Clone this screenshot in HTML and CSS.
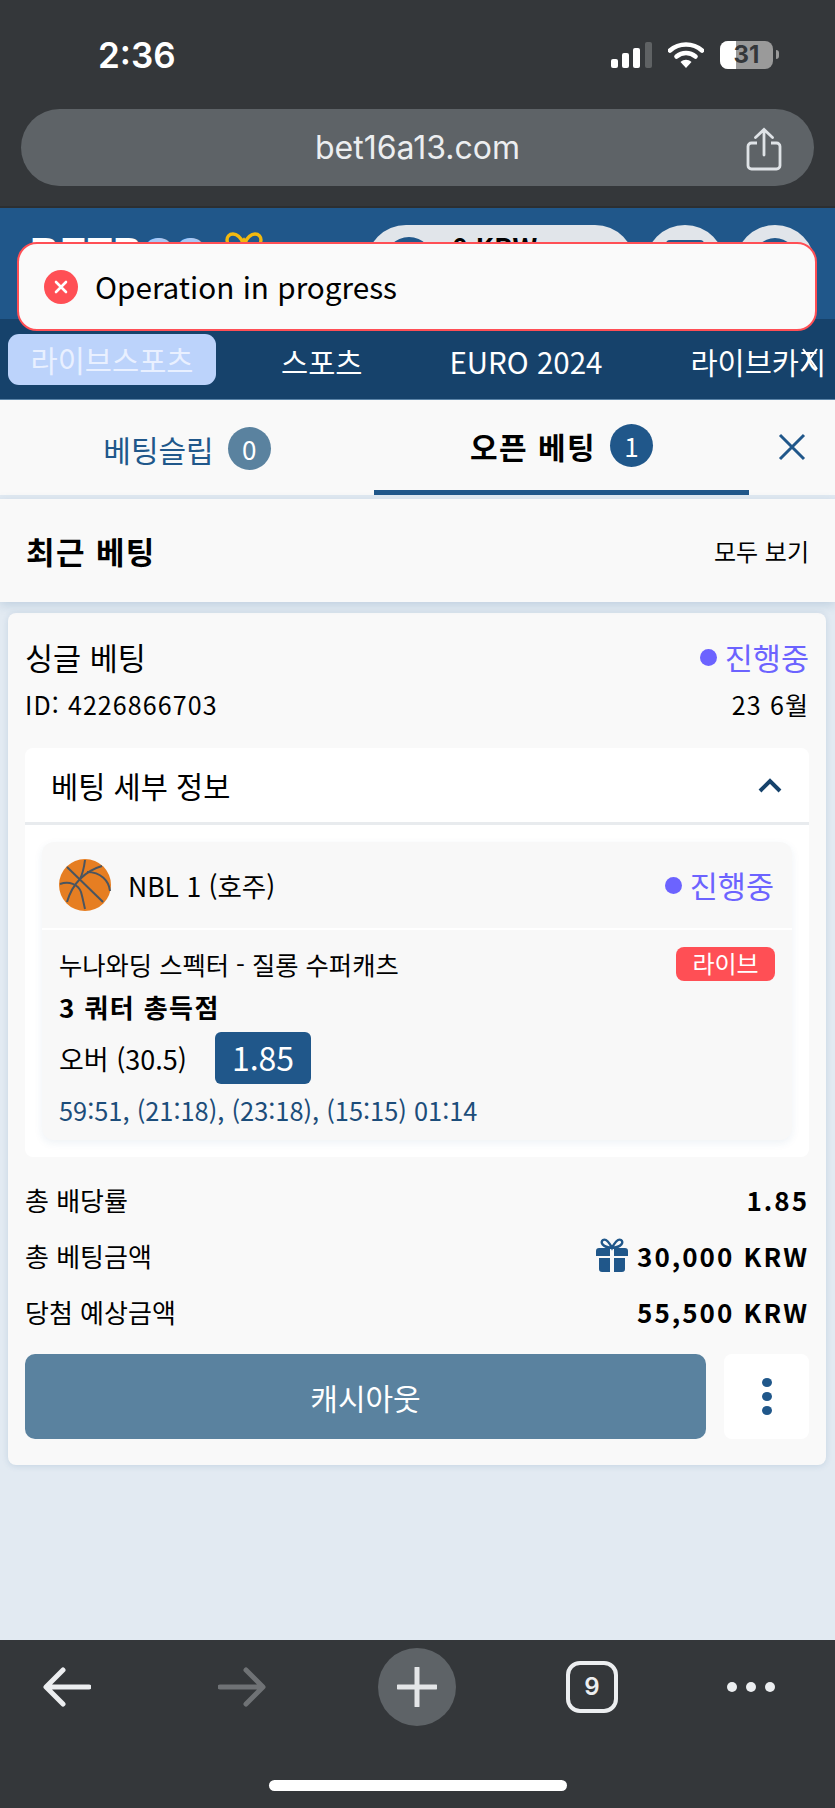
FILE: index.html
```html
<!DOCTYPE html>
<html lang="ko">
<head>
  <meta charset="UTF-8">
  <title>bet16a13.com</title>
  <link rel="stylesheet" href="styles.css">
</head>
<body>
  <div class="browser-top">
    <div class="status-bar">
      <span class="time">2:36</span>
      <div class="status-icons">
        <svg class="signal" width="41" height="26" viewBox="0 0 41 26">
          <rect x="0" y="17" width="7" height="9" rx="2" fill="#fff"/>
          <rect x="11" y="11" width="7" height="15" rx="2" fill="#fff"/>
          <rect x="22" y="6" width="7" height="20" rx="2" fill="#fff"/>
          <rect x="34" y="0" width="7" height="26" rx="2" fill="#5f6264"/>
        </svg>
        <svg class="wifi" width="36" height="27" viewBox="0 0 36 27">
          <path d="M2 9.5C11 1.5 25 1.5 34 9.5" fill="none" stroke="#fff" stroke-width="4.6" stroke-linecap="round"/>
          <path d="M8.5 15.5C14 10.8 22 10.8 27.5 15.5" fill="none" stroke="#fff" stroke-width="4.6" stroke-linecap="round"/>
          <path d="M12.5 21L18 27L23.5 21C20 18 16 18 12.5 21Z" fill="#fff"/>
        </svg>
        <div class="battery"><span class="battery-fill"></span><span class="battery-num">31</span></div>
        <span class="battery-nub"></span>
      </div>
    </div>
    <div class="url-bar">
      <span class="url">bet16a13.com</span>
      <svg class="share" width="36" height="44" viewBox="0 0 36 44">
        <path d="M11 16H5.5C3.5 16 2 17.500 2 19.500V38.500C2 40.500 3.500 42 5.500 42H30.500C32.500 42 34 40.500 34 38.500V19.500C34 17.500 32.500 16 30.500 16H25" fill="none" stroke="#dfe3e7" stroke-width="2.800"/>
        <path d="M18 28V3M9.500 10.500L18 2.500L26.500 10.500" fill="none" stroke="#dfe3e7" stroke-width="2.800" stroke-linecap="round"/>
      </svg>
    </div>
  </div>

  <header class="site-header">
    <div class="logo">
      <span class="logo-text">BETB<em>OO</em></span>
      <svg class="logo-mark" width="38" height="24" viewBox="0 0 38 24">
        <path d="M19 12C15 4 11 2 8 2C4 2 2 5 2 8C2 12 5 15 8 15C12 15 16 12 19 8C22 12 26 15 30 15C33 15 36 12 36 8C36 5 34 2 30 2C27 2 23 4 19 12Z" fill="none" stroke="#f2b90f" stroke-width="3.400"/>
      </svg>
    </div>
    <div class="header-right">
      <div class="balance"><span class="balance-dot"></span><span class="balance-text">0 KRW</span></div>
      <div class="round-btn"><span class="round-inner square"></span></div>
      <div class="round-btn"><span class="round-inner"></span></div>
    </div>
  </header>

  <nav class="main-nav">
    <div class="nav-scroll">
      <a class="nav-item active">라이브스포츠</a>
      <a class="nav-item sports">스포츠</a>
      <a class="nav-item euro">EURO 2024</a>
      <a class="nav-item casino">라이브카지노</a>
    </div>
    <svg class="nav-close" width="18" height="24" viewBox="0 0 18 24">
      <path d="M2 2L16 22M16 2L2 22" stroke="#fff" stroke-width="2"/>
    </svg>
  </nav>

  <div class="toast">
    <svg class="toast-icon" width="34" height="34" viewBox="0 0 34 34">
      <circle cx="17" cy="17" r="17" fill="#ff4f55"/>
      <path d="M12 12L22 22M22 12L12 22" stroke="#fff" stroke-width="2.600" stroke-linecap="round"/>
    </svg>
    <span>Operation in progress</span>
  </div>

  <main class="content">
    <div class="tabs">
      <div class="tab">베팅슬립 <span class="count muted">0</span></div>
      <div class="tab current">오픈 베팅 <span class="count">1</span></div>
      <svg class="tabs-close" width="28" height="28" viewBox="0 0 28 28">
        <path d="M2 2L26 26M26 2L2 26" stroke="#20578a" stroke-width="3"/>
      </svg>
    </div>

    <div class="section-head">
      <h2>최근 베팅</h2>
      <a class="see-all">모두 보기</a>
    </div>

    <section class="bet-card">
      <div class="bet-top">
        <span class="bet-type">싱글 베팅</span>
        <span class="status"><i></i>진행중</span>
      </div>
      <div class="bet-id">
        <span>ID: 4226866703</span>
        <span>23 6월</span>
      </div>

      <div class="details">
        <div class="details-head">
          <span>베팅 세부 정보</span>
          <svg width="26" height="16" viewBox="0 0 26 16">
            <path d="M3 14L13 4L23 14" fill="none" stroke="#16426b" stroke-width="4"/>
          </svg>
        </div>
        <div class="match">
          <div class="match-head">
            <div class="league">
              <svg width="52" height="52" viewBox="0 0 52 52">
                <circle cx="26" cy="26" r="26" fill="#e67e22"/>
                <g fill="none" stroke="#4a5560" stroke-width="2">
                  <path d="M8 8L44 43"/>
                  <path d="M26 1C25 9 24 14 21 20"/>
                  <path d="M43 7C36 9 28 13 21 20C16 25 11 33 8 43"/>
                  <path d="M1 25C10 22 19 25 22 33C24 40 25 46 26 50"/>
                  <path d="M51 32C50 22 42 13 28 13"/>
                </g>
              </svg>
              <span>NBL 1 (호주)</span>
            </div>
            <span class="status"><i></i>진행중</span>
          </div>
          <div class="match-body">
            <div class="teams">
              <span>누나와딩 스펙터 - 질롱 수퍼캐츠</span>
              <span class="live">라이브</span>
            </div>
            <div class="market">3 쿼터 총득점</div>
            <div class="pick">
              <span>오버 (30.5)</span>
              <span class="odds">1.85</span>
            </div>
            <div class="score">59:51, (21:18), (23:18), (15:15) 01:14</div>
          </div>
        </div>
      </div>

      <div class="summary">
        <div class="sum-row"><span>총 배당률</span><b>1.85</b></div>
        <div class="sum-row">
          <span>총 베팅금액</span>
          <b class="with-icon">
            <svg width="32" height="34" viewBox="0 0 32 34">
              <path d="M16 10C12 2 9 1 7 2C4 4 6 9 16 10C26 9 28 4 25 2C23 1 20 2 16 10Z" fill="none" stroke="#20578a" stroke-width="2.400"/>
              <path d="M3 10H14V18H0V13C0 11 1 10 3 10ZM18 10H29C31 10 32 11 32 13V18H18ZM3 20H14V34H6C4 34 3 33 3 31ZM18 20H29V31C29 33 28 34 26 34H18Z" fill="#20578a"/>
            </svg>
            30,000 KRW
          </b>
        </div>
        <div class="sum-row"><span>당첨 예상금액</span><b>55,500 KRW</b></div>
      </div>

      <div class="actions">
        <button class="cashout">캐시아웃</button>
        <button class="more"><i></i><i></i><i></i></button>
      </div>
    </section>
  </main>

  <div class="browser-bottom">
    <div class="toolbar">
      <div class="tool">
        <svg width="48" height="40" viewBox="0 0 48 40">
          <path d="M46 20H4M20 3L3 20L20 37" fill="none" stroke="#eceef0" stroke-width="5" stroke-linecap="round" stroke-linejoin="round"/>
        </svg>
      </div>
      <div class="tool">
        <svg width="48" height="40" viewBox="0 0 48 40">
          <path d="M2 20H44M28 3L45 20L28 37" fill="none" stroke="#6f7275" stroke-width="5" stroke-linecap="round" stroke-linejoin="round"/>
        </svg>
      </div>
      <div class="tool">
        <div class="new-tab">
          <svg width="40" height="40" viewBox="0 0 40 40">
            <path d="M20 1V39M1 20H39" stroke="#e4e6e8" stroke-width="5" stroke-linecap="round"/>
          </svg>
        </div>
      </div>
      <div class="tool"><div class="tab-count">9</div></div>
      <div class="tool"><div class="menu-dots"><i></i><i></i><i></i></div></div>
    </div>
    <div class="home-bar"></div>
  </div>
</body>
</html>
```

FILE: styles.css
```css
* {
  box-sizing: border-box;
}
html, body {
  margin: 0;
  height: 100%;
}
body {
  position: relative;
  display: flex;
  flex-direction: column;
  height: 1808px;
  overflow: hidden;
  font-family: "Noto Sans CJK KR", "Noto Sans", sans-serif;
  color: #000;
  background: #e2eaf2;
}

/* browser chrome */
.browser-top {
  height: 208px;
  background: #34373a;
  border-bottom: 2px solid #2c2f31;
}
.status-bar {
  display: flex;
  justify-content: space-between;
  align-items: center;
  height: 109px;
  padding: 0 56px 0 98px;
  color: #fff;
}
.time {
  font-family: Inter, sans-serif;
  font-size: 35px;
  font-weight: 600;
}
.status-icons {
  display: flex;
  align-items: center;
}
.signal {
  margin-right: 16px;
}
.wifi {
  margin-right: 16px;
}
.battery {
  position: relative;
  width: 53px;
  height: 28px;
  border-radius: 8px;
  overflow: hidden;
  background: #9a9a9a;
  text-align: center;
}
.battery-fill {
  position: absolute;
  left: 0;
  top: 0;
  width: 16px;
  height: 28px;
  background: #fff;
}
.battery-num {
  position: relative;
  font-family: Inter, sans-serif;
  font-size: 24px;
  font-weight: 700;
  line-height: 28px;
  color: #34373a;
}
.battery-nub {
  width: 3px;
  height: 9px;
  margin-left: 3px;
  border-radius: 0 3px 3px 0;
  background: #9a9a9a;
}
.url-bar {
  display: flex;
  align-items: center;
  justify-content: center;
  position: relative;
  height: 77px;
  margin: 0 21px;
  border-radius: 39px;
  background: #5e6367;
}
.url {
  font-family: Inter, sans-serif;
  font-size: 32px;
  color: #eceef0;
}
.share {
  position: absolute;
  right: 32px;
  top: 18px;
}

/* site header + nav */
.site-header {
  display: flex;
  justify-content: space-between;
  height: 111px;
  padding: 17px 20px 0 30px;
  background: #20578a;
  overflow: hidden;
}
.logo {
  display: flex;
  align-items: flex-start;
}
.logo-text {
  width: 175px;
  margin-top: 5px;
  font-family: "Liberation Sans", sans-serif;
  font-size: 40px;
  font-weight: 700;
  line-height: 44px;
  letter-spacing: 1px;
  color: #fff;
}
.logo-text em {
  font-style: normal;
  color: #a9c8f5;
}
.logo-mark {
  margin: 7px 0 0 20px;
}
.header-right {
  display: flex;
  gap: 10px;
}
.balance {
  display: flex;
  align-items: flex-start;
  width: 269px;
  height: 80px;
  padding: 12px 0 0 18px;
  border-radius: 40px;
  background: #e1e5ea;
}
.balance-dot {
  width: 50px;
  height: 50px;
  border-radius: 50%;
  background: #20578a;
}
.balance-text {
  margin: -4px 0 0 18px;
  font-size: 27px;
  font-weight: 700;
  line-height: 28px;
}
.round-btn {
  display: flex;
  justify-content: center;
  width: 80px;
  height: 80px;
  padding-top: 13px;
  border-radius: 50%;
  background: #e1e5ea;
}
.round-inner {
  width: 44px;
  height: 44px;
  border-radius: 50%;
  background: #20578a;
}
.round-inner.square {
  width: 38px;
  margin-top: 2px;
  border-radius: 4px;
}
.main-nav {
  position: relative;
  height: 81px;
  padding-right: 10px;
  background: #16426b;
  border-bottom: 1px solid #5b84a8;
  font-size: 29.500px;
  color: #fff;
  white-space: nowrap;
}
.nav-scroll {
  display: flex;
  align-items: center;
  height: 80px;
  padding-left: 8px;
  overflow: hidden;
}
.nav-item {
  flex: none;
  margin-top: 3px;
}
.nav-item.active {
  width: 208px;
  height: 51px;
  margin-top: 0;
  border-radius: 11px;
  background: #bcd3fb;
  color: #e9f0ff;
  text-align: center;
  line-height: 51px;
}
.sports {
  margin-left: 65px;
}
.euro {
  margin-left: 87px;
}
.casino {
  margin-left: 88px;
}
.nav-close {
  position: absolute;
  right: 16px;
  top: 28px;
}

/* toast */
.toast {
  position: absolute;
  left: 17px;
  top: 242px;
  display: flex;
  align-items: center;
  gap: 17px;
  width: 800px;
  height: 89px;
  padding-left: 25px;
  border: 2px solid #ff4f55;
  border-radius: 20px;
  background: #fafafa;
  font-size: 29.700px;
}

/* slip */
.tabs {
  position: relative;
  display: flex;
  height: 99px;
  background: #f9f9f9;
  border-bottom: 4px solid #e2eaf2;
}
.tab {
  display: flex;
  align-items: center;
  justify-content: center;
  gap: 14px;
  width: 374px;
  height: 95px;
  padding-top: 2px;
  font-size: 30px;
  color: #20578a;
}
.tab.current {
  width: 375px;
  padding-top: 1px;
  border-bottom: 5px solid #20578a;
  font-weight: 700;
  letter-spacing: 1.400px;
  color: #000;
}
.count {
  display: flex;
  align-items: center;
  justify-content: center;
  width: 43px;
  height: 43px;
  border-radius: 50%;
  background: #20578a;
  font-size: 26px;
  font-weight: 400;
  letter-spacing: 0;
  color: #fff;
}
.count.muted {
  background: #5a829f;
}
.tabs-close {
  position: absolute;
  right: 29px;
  top: 33px;
}
.section-head {
  position: relative;
  display: flex;
  justify-content: space-between;
  align-items: center;
  height: 103px;
  padding: 0 26px;
  background: #f9f9f9;
  box-shadow: 0 3px 10px rgba(32, 87, 138, .18);
}
.section-head h2 {
  margin: 0;
  font-size: 31px;
  font-weight: 700;
  letter-spacing: 1.400px;
}
.see-all {
  font-size: 24px;
}
.bet-card {
  margin: 11px 9px 0 8px;
  height: 852px;
  padding: 0 17px;
  border-radius: 8px;
  background: #f9f9f9;
  box-shadow: 0 1px 6px rgba(32, 87, 138, .15);
}
.bet-top,
.bet-id {
  display: flex;
  justify-content: space-between;
  align-items: center;
}
.bet-top {
  height: 66px;
  padding-top: 22px;
}
.bet-type {
  font-size: 30.500px;
}
.status {
  display: flex;
  align-items: center;
  gap: 8px;
  font-size: 30.500px;
  color: #6c63ff;
}
.status i {
  width: 17px;
  height: 17px;
  border-radius: 50%;
  background: #6c63ff;
}
.bet-id {
  height: 48px;
  padding-top: 2px;
  font-size: 25px;
  letter-spacing: 1.100px;
}
.details {
  height: 409px;
  margin-top: 21px;
  border-radius: 8px;
  background: #fff;
}
.details-head {
  display: flex;
  justify-content: space-between;
  align-items: center;
  height: 77px;
  padding: 0 26px;
  border-bottom: 3px solid #e8ebee;
  font-size: 29.500px;
}
.match {
  height: 298px;
  margin: 17px 17px 0;
  border-radius: 12px;
  background: #f8f8f8;
  box-shadow: 0 3px 8px rgba(32, 87, 138, .08);
}
.match-head {
  display: flex;
  justify-content: space-between;
  align-items: center;
  height: 88px;
  padding: 0 18px 0 17px;
  border-bottom: 2px solid #fff;
}
.league {
  display: flex;
  align-items: center;
  gap: 17px;
  font-size: 26.500px;
}
.match-body {
  padding: 17px 17px 0;
  font-size: 25.300px;
}
.teams {
  display: flex;
  justify-content: space-between;
  align-items: center;
  height: 34px;
}
.live {
  width: 99px;
  height: 34px;
  border-radius: 8px;
  background: #ff4f55;
  font-size: 24px;
  line-height: 32px;
  text-align: center;
  color: #fff;
}
.market {
  margin-top: 8px;
  font-size: 26px;
  font-weight: 700;
  letter-spacing: 1.400px;
  line-height: 36px;
}
.pick {
  display: flex;
  align-items: center;
  gap: 28px;
  margin-top: 7px;
  font-size: 27px;
}
.odds {
  width: 96px;
  height: 52px;
  border-radius: 6px;
  background: #20578a;
  color: #fff;
  font-size: 32px;
  line-height: 50px;
  text-align: center;
}
.score {
  margin-top: 9px;
  font-size: 25.400px;
  line-height: 34px;
  color: #1c4d7a;
}
.summary {
  margin-top: 14px;
}
.sum-row {
  display: flex;
  justify-content: space-between;
  align-items: center;
  height: 56px;
  font-size: 26px;
}
.sum-row b {
  font-size: 26px;
  font-weight: 700;
  letter-spacing: 2px;
}
.with-icon {
  display: flex;
  align-items: center;
  gap: 9px;
}
.actions {
  display: flex;
  gap: 18px;
  margin-top: 15px;
}
button {
  border: 0;
  font-family: inherit;
}
.cashout {
  width: 681px;
  height: 85px;
  border-radius: 10px;
  background: #5a829f;
  color: #fff;
  font-size: 30px;
}
.more {
  display: flex;
  flex-direction: column;
  align-items: center;
  justify-content: center;
  gap: 5px;
  width: 85px;
  height: 85px;
  border-radius: 8px;
  background: #fff;
}
.more i {
  width: 10px;
  height: 9px;
  border-radius: 50%;
  background: #20578a;
}
.content {
  flex: 1;
}
.browser-bottom {
  height: 168px;
  background: #34373a;
}
.toolbar {
  display: flex;
  justify-content: space-between;
  align-items: center;
  height: 94px;
  padding: 0 44px 0 43px;
}
.tool {
  display: flex;
  justify-content: center;
  width: 48px;
}
.new-tab {
  flex: none;
  display: flex;
  align-items: center;
  justify-content: center;
  width: 78px;
  height: 78px;
  border-radius: 50%;
  background: #5e6367;
}
.tab-count {
  flex: none;
  width: 52px;
  height: 52px;
  border: 4px solid #eceef0;
  border-radius: 14px;
  font-family: Inter, sans-serif;
  font-size: 24px;
  font-weight: 600;
  line-height: 44px;
  text-align: center;
  color: #eceef0;
}
.menu-dots {
  flex: none;
  display: flex;
  gap: 9px;
  margin-right: 32px;
}
.menu-dots i {
  width: 10px;
  height: 10px;
  border-radius: 50%;
  background: #eceef0;
}
.home-bar {
  width: 298px;
  height: 11px;
  margin: 46px auto 0;
  border-radius: 6px;
  background: #fff;
}
```
